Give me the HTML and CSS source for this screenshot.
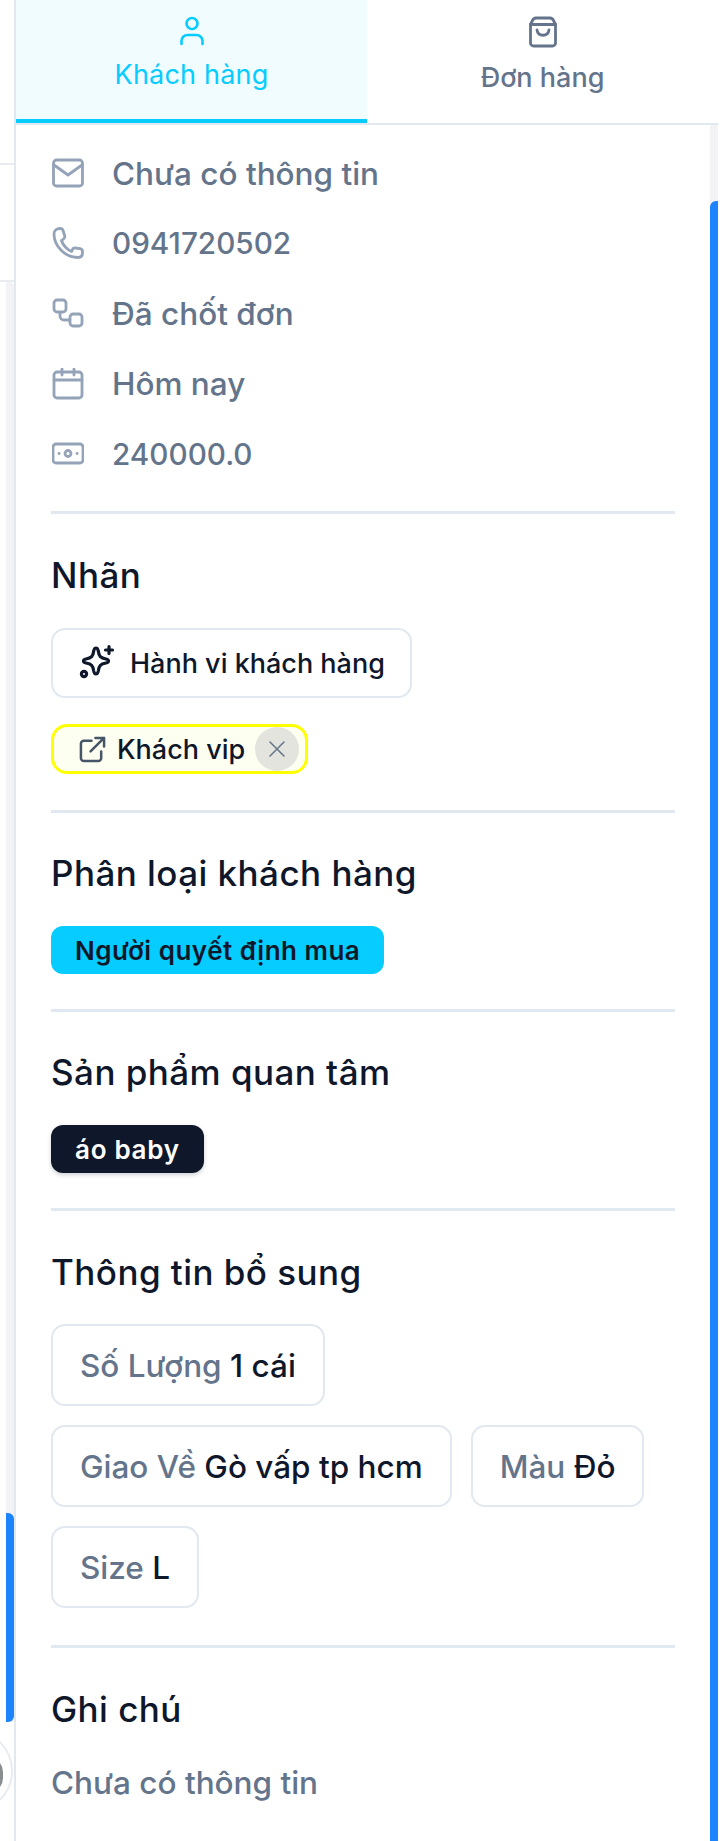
FILE: index.html
```html
<!DOCTYPE html>
<html lang="vi">
<head>
<meta charset="utf-8">
<title>Khách hàng</title>
<link rel="stylesheet" href="styles.css">
</head>
<body>
<div class="backdrop">
  <div class="bg-line bg-line-a"></div>
  <div class="bg-line bg-line-b"></div>
  <div class="left-track"><div class="left-thumb"></div></div>
  <div class="avatar"><div class="avatar-disk"></div></div>
</div>
<main class="panel">
  <nav class="tabs">
    <div class="tab tab-active">
      <svg class="tab-icon" viewBox="0 0 32 32" fill="none" stroke="currentColor" stroke-width="2.600" stroke-linecap="round"><circle cx="16" cy="8.500" r="5.500"/><path d="M5.500 29v-3a6 6 0 0 1 6-6h9a6 6 0 0 1 6 6v3"/></svg>
      <span>Khách hàng</span>
    </div>
    <div class="tab">
      <svg class="tab-icon" viewBox="0 0 32 32" fill="none" stroke="currentColor" stroke-width="2.800" stroke-linecap="round" stroke-linejoin="round"><path d="M9 2h14a4 4 0 0 1 3.500 2.500l2 4V27a3 3 0 0 1-3 3H6.500a3 3 0 0 1-3-3V8.500l2-4A4 4 0 0 1 9 2z"/><path d="M3.500 8.500h25"/><path d="M10 14c1 7 11 7 12 0"/></svg>
      <span>Đơn hàng</span>
    </div>
  </nav>
  <div class="content">
    <ul class="info">
      <li><svg class="i" viewBox="0 0 32 32" fill="none" stroke="currentColor" stroke-width="2.800" stroke-linejoin="round" stroke-linecap="round"><rect x="1.500" y="3" width="29" height="26" rx="3"/><path d="M2 8l14 10L30 8"/></svg><span>Chưa có thông tin</span></li>
      <li class="num"><svg class="i" viewBox="0 0 32 32" fill="none" stroke="currentColor" stroke-width="2.800" stroke-linejoin="round"><path d="M8 1.500c-3.500 0-6 2.500-6 5.500C2 19 13 30.500 26 30.500c3 0 4.500-2 4.500-4.500v-1.500c0-1.500-1-2.500-2.500-2.800l-4.500-.7c-1.300-.2-2.500.4-3 1.500l-1 2c-4-1.500-8.500-6-10-11l2-1.500c1-.8 1.500-2 1.200-3.200L11 3.500C10.700 2.300 9.500 1.500 8 1.500z"/></svg><span>0941720502</span></li>
      <li><svg class="i" viewBox="0 0 32 32" fill="none" stroke="currentColor" stroke-width="2.800" stroke-linejoin="round"><rect x="2" y="3" width="12" height="12" rx="3"/><rect x="18" y="17" width="12" height="12" rx="3"/><path d="M8 15v4a4 4 0 0 0 4 4h6"/></svg><span>Đã chốt đơn</span></li>
      <li><svg class="i" viewBox="0 0 32 32" fill="none" stroke="currentColor" stroke-width="2.800" stroke-linejoin="round" stroke-linecap="round"><rect x="2" y="4" width="28" height="26" rx="3"/><path d="M2 12h28M10 1v6M22 1v6"/></svg><span>Hôm nay</span></li>
      <li class="num"><svg class="i" viewBox="0 0 32 32" fill="none" stroke="currentColor" stroke-width="2.800" stroke-linejoin="round" stroke-linecap="round"><rect x="1" y="6" width="30" height="19" rx="3"/><circle cx="16" cy="15.500" r="3"/><path d="M7 15.500h.1M25 15.500h.1"/></svg><span>240000.0</span></li>
    </ul>

    <section class="sec sec-labels">
      <h2>Nhãn</h2>
      <button class="btn-behavior">
        <svg class="star" viewBox="0 0 34 34" fill="none" stroke="currentColor" stroke-width="3.200" stroke-linejoin="round" stroke-linecap="round"><path d="M15 2c1.500 0 2 1.500 2.300 3C18 10.500 19.500 12 25 13c1.500.3 2.500.7 2.500 2s-1 1.700-2.500 2C19.500 18 18 19.500 17.300 25 17 26.500 16.500 28 15 28s-2-1.500-2.300-3C12 19.500 10.500 18 5 17c-1.500-.3-2.500-.7-2.500-2s1-1.700 2.500-2C10.500 12 12 10.500 12.700 5 13 3.500 13.500 2 15 2z"/><circle cx="3" cy="28" r="2.600"/><path d="M28 .5v7M24.500 4h7"/></svg>
        <span>Hành vi khách hàng</span>
      </button>
      <div class="chip-yellow">
        <svg class="ext" viewBox="0 0 28 28" fill="none" stroke="currentColor" stroke-width="2.600" stroke-linecap="round" stroke-linejoin="round"><path d="M13 5H5a3 3 0 0 0-3 3v15a3 3 0 0 0 3 3h15a3 3 0 0 0 3-3v-7"/><path d="M17 2h9v9M26 2L12 16"/></svg>
        <span>Khách vip</span>
        <span class="chip-close"><svg viewBox="0 0 16 16" fill="none" stroke="currentColor" stroke-width="1.500" stroke-linecap="round"><path d="M1 1l14 14M15 1L1 15"/></svg></span>
      </div>
    </section>

    <section class="sec">
      <h2>Phân loại khách hàng</h2>
      <span class="tag tag-blue">Người quyết định mua</span>
    </section>

    <section class="sec">
      <h2>Sản phẩm quan tâm</h2>
      <span class="tag tag-dark">áo baby</span>
    </section>

    <section class="sec sec-extra">
      <h2>Thông tin bổ sung</h2>
      <div class="props">
        <div class="props-row">
          <div class="prop">Số Lượng <b>1 cái</b></div>
        </div>
        <div class="props-row">
          <div class="prop">Giao Về <b>Gò vấp tp hcm</b></div>
          <div class="prop">Màu <b>Đỏ</b></div>
        </div>
        <div class="props-row">
          <div class="prop">Size <b>L</b></div>
        </div>
      </div>
    </section>

    <section class="sec sec-last">
      <h2>Ghi chú</h2>
      <p class="note">Chưa có thông tin</p>
    </section>
  </div>
  <div class="right-track"><div class="right-thumb"></div></div>
</main>
</body>
</html>
```
FILE: styles.css
```css
* { box-sizing: border-box; }
html, body { margin: 0; padding: 0; }
body {
  width: 721px;
  height: 1841px;
  overflow: hidden;
  background: #fff;
  font-family: Inter, "Noto Sans", sans-serif;
  color: #0f172a;
  position: relative;
}
.backdrop { position: absolute; inset: 0; }
.bg-line { position: absolute; left: 0; width: 14px; height: 2px; background: #e8ebf0; }
.bg-line-a { top: 163px; }
.bg-line-b { top: 280px; }
.left-track { position: absolute; left: 6px; top: 282px; height: 1440px; width: 8px; background: #f3f3f5; border-radius: 0 4px 0 0; }
.left-thumb { position: absolute; left: 0; top: 1231px; width: 8px; height: 209px; background: #1d84ff; border-radius: 0 6px 6px 0; }
.avatar { position: absolute; left: -32px; top: 1730px; width: 45px; height: 82px; border: 2px solid #e8ebf0; border-radius: 0 41px 41px 0; background: #fff; }
.avatar-disk { position: absolute; left: 18px; top: 25px; width: 15px; height: 36px; background: #8a8d90; border-radius: 0 18px 18px 0; }

.panel {
  position: absolute;
  left: 14px;
  top: 0;
  width: 704px;
  height: 1841px;
  background: #fff;
  border-left: 2px solid #e2e8f0;
}
.tabs { display: flex; height: 125px; border-bottom: 2px solid #e2e8f0; }
.tab {
  width: 351px;
  display: flex;
  flex-direction: column;
  align-items: center;
  padding-top: 16px;
  gap: 14px;
  color: #64748b;
  font-size: 27px;
  font-weight: 500;
  line-height: 32px;
}
.tab-active { color: #06ccff; background: #f0fcff; height: 123px; border-bottom: 4px solid #06ccff; gap: 12px; padding-top: 15px; font-weight: 400; letter-spacing: .2px; }
.tab-icon { width: 32px; height: 32px; display: block; }

.content { padding: 0 5px 0 35px; width: 664px; }
.info { list-style: none; margin: 0; padding: 13px 0 0; border-bottom: 3px solid #e2e8f0; height: 389px; }
.info li { display: flex; align-items: center; height: 70.200px; gap: 28px; padding-left: 1px; color: #64748b; font-size: 31.500px; font-weight: 450; }
.info li.num { font-size: 29.700px; }
.i { width: 32px; height: 32px; color: #94a3b8; flex: none; }

.sec { border-bottom: 3px solid #e2e8f0; padding-top: 39px; height: 199px; }
.sec h2 { margin: 0; font-size: 35px; font-weight: 500; line-height: 42px; letter-spacing: .45px; color: #0f172a; }
.sec-labels { height: 299px; padding-top: 40px; }
.btn-behavior {
  display: flex; align-items: center; gap: 15px;
  margin-top: 32px; height: 70px; width: 361px; padding: 0 10px 0 28px;
  background: #fff; border: 2px solid #e2e8f0; border-radius: 14px;
  font: 450 27px Inter, sans-serif; color: #0f172a; white-space: nowrap;
}
.star { width: 34px; height: 34px; flex: none; overflow: visible; }
.chip-yellow {
  display: flex; align-items: center;
  margin-top: 26px; width: 257px; height: 50px;
  padding: 0 6px 0 25px;
  background: #fdfff0; border: 3px solid #ffff00; border-radius: 16px;
  font-size: 27px; font-weight: 450;
}
.ext { width: 27px; height: 27px; color: #475569; flex: none; margin-right: 11px; }
.chip-close { margin-left: auto; width: 44px; height: 44px; border-radius: 50%; background: #e2e4dd; color: #64748b; display: flex; align-items: center; justify-content: center; }
.chip-close svg { width: 16px; height: 16px; }
.tag { display: inline-flex; align-items: center; margin-top: 32px; height: 48px; padding: 0 24px; border-radius: 12px; font-size: 26px; font-weight: 600; letter-spacing: .5px; }
.tag-blue { background: #06ccff; color: #0f172a; }
.tag-dark { background: #0f172a; color: #fff; box-shadow: 0 2px 4px rgba(15,23,42,.2); letter-spacing: .7px; }

.sec-extra { height: 437px; padding-top: 40px; }
.props { display: flex; flex-direction: column; gap: 19px; margin-top: 31px; }
.props-row { display: flex; gap: 19px; }
.prop {
  height: 82px; display: flex; align-items: center;
  padding: 0 27px; border: 2px solid #e2e8f0; border-radius: 14px;
  color: #64748b; font-size: 31.500px; font-weight: 450; background: #fff; white-space: pre;
}
.prop b { color: #0f172a; font-weight: 500; }
.sec-last { border-bottom: 0; padding-top: 40px; }
.note { margin: 34px 0 0; color: #64748b; font-size: 31.500px; font-weight: 450; line-height: 38px; }

.right-track { position: absolute; left: 694px; top: 125px; bottom: 0; width: 8px; background: #f3f3f5; }
.right-thumb { position: absolute; left: 0; top: 76px; bottom: 0; width: 8px; background: #1d84ff; border-radius: 6px 0 0 0; }
```
